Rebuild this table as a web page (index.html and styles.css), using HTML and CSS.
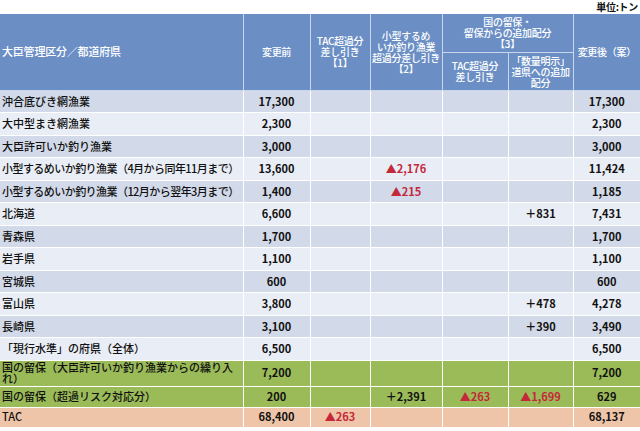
FILE: index.html
```html
<!DOCTYPE html>
<html lang="ja">
<head>
<meta charset="utf-8">
<link rel="stylesheet" href="styles.css">
</head>
<body>
<div class="unit">単位:トン</div>
<table class="tac">
  <colgroup>
    <col class="c-label"><col class="c-before"><col class="c-tac"><col class="c-small"><col class="c-res1"><col class="c-res2"><col class="c-after">
  </colgroup>
  <thead>
    <tr class="h1">
      <th rowspan="2" class="lh">大臣管理区分／都道府県</th>
      <th rowspan="2">変更前</th>
      <th rowspan="2">TAC超過分<br>差し引き<br>【1】</th>
      <th rowspan="2">小型するめ<br>いか釣り漁業<br>超過分差し引き<br>【2】</th>
      <th colspan="2">国の留保・<br>留保からの追加配分<br>【3】</th>
      <th rowspan="2">変更後（案）</th>
    </tr>
    <tr class="h2">
      <th>TAC超過分<br>差し引き</th>
      <th>「数量明示」<br>道県への追加<br>配分</th>
    </tr>
  </thead>
  <tbody>
    <tr class="d"><td class="lb">沖合底びき網漁業</td><td>17,300</td><td></td><td></td><td></td><td></td><td>17,300</td></tr>
    <tr class="l"><td class="lb">大中型まき網漁業</td><td>2,300</td><td></td><td></td><td></td><td></td><td>2,300</td></tr>
    <tr class="d"><td class="lb">大臣許可いか釣り漁業</td><td>3,000</td><td></td><td></td><td></td><td></td><td>3,000</td></tr>
    <tr class="l"><td class="lb tight">小型するめいか釣り漁業（4月から同年11月まで）</td><td>13,600</td><td></td><td class="neg">▲2,176</td><td></td><td></td><td>11,424</td></tr>
    <tr class="d"><td class="lb tight">小型するめいか釣り漁業（12月から翌年3月まで）</td><td>1,400</td><td></td><td class="neg">▲215</td><td></td><td></td><td>1,185</td></tr>
    <tr class="l"><td class="lb">北海道</td><td>6,600</td><td></td><td></td><td></td><td>＋831</td><td>7,431</td></tr>
    <tr class="d"><td class="lb">青森県</td><td>1,700</td><td></td><td></td><td></td><td></td><td>1,700</td></tr>
    <tr class="l"><td class="lb">岩手県</td><td>1,100</td><td></td><td></td><td></td><td></td><td>1,100</td></tr>
    <tr class="d"><td class="lb">宮城県</td><td>600</td><td></td><td></td><td></td><td></td><td>600</td></tr>
    <tr class="l"><td class="lb">富山県</td><td>3,800</td><td></td><td></td><td></td><td>＋478</td><td>4,278</td></tr>
    <tr class="d"><td class="lb">長崎県</td><td>3,100</td><td></td><td></td><td></td><td>＋390</td><td>3,490</td></tr>
    <tr class="l"><td class="lb">「現行水準」の府県（全体）</td><td>6,500</td><td></td><td></td><td></td><td></td><td>6,500</td></tr>
    <tr class="g tall"><td class="lb">国の留保（大臣許可いか釣り漁業からの繰り入れ）</td><td>7,200</td><td></td><td></td><td></td><td></td><td>7,200</td></tr>
    <tr class="g g2"><td class="lb">国の留保（超過リスク対応分）</td><td>200</td><td></td><td>＋2,391</td><td class="neg">▲263</td><td class="neg">▲1,699</td><td>629</td></tr>
    <tr class="p"><td class="lb">TAC</td><td>68,400</td><td class="neg">▲263</td><td></td><td></td><td></td><td>68,137</td></tr>
  </tbody>
</table>
</body>
</html>
```

FILE: styles.css
```css
html, body {
  margin: 0;
  padding: 0;
  background: #fff;
}
body {
  width: 640px;
  height: 431px;
  overflow: hidden;
  font-family: "Noto Sans CJK JP", "Liberation Sans", sans-serif;
  color: #111;
}
.unit {
  height: 14px;
  font-size: 10px;
  line-height: 14px;
  font-weight: 700;
  text-align: right;
  padding-right: 2px;
  letter-spacing: -0.3px;
}
.tac {
  width: 640px;
  border-collapse: collapse;
  table-layout: fixed;
  font-size: 11px;
}
.c-label { width: 243px; }
.c-before { width: 67px; }
.c-tac { width: 60px; }
.c-small { width: 72px; }
.c-res1 { width: 66px; }
.c-res2 { width: 65px; }
.c-after { width: 67px; }

.tac th {
  background: #6b8fc5;
  color: #fff;
  font-weight: 500;
  font-size: 10px;
  line-height: 11px;
  padding: 0;
  border: 1px solid #c9d6ec;
  text-align: center;
  vertical-align: middle;
  letter-spacing: -0.3px;
  white-space: nowrap;
  overflow: hidden;
}
.tac thead tr:first-child th { border-top: none; }
.tac th:first-child { border-left: none; }
.tac th:last-child { border-right: none; }
.h1 { height: 38px; }
.h2 { height: 38px; }
.tac th.lh {
  text-align: left;
  padding-left: 2px;
  font-size: 11px;
  letter-spacing: -0.2px;
}
.tac td {
  border: 1px solid #fff;
  padding: 0;
  text-align: center;
  vertical-align: middle;
  font-weight: 700;
  line-height: 11.5px;
  white-space: nowrap;
}
.tac td:first-child { border-left: none; }
.tac td:last-child { border-right: none; }
.tac td.lb {
  text-align: left;
  padding-left: 2px;
  font-weight: 500;
  white-space: normal;
}
.tac td.tight {
  white-space: nowrap;
  letter-spacing: -0.55px;
}
.tac tbody tr { height: 22.5px; }
.d td { background: #d2d9e8; }
.l td { background: #e9edf5; }
.g td { background: #9bbb59; }
.tac tbody tr.tall { height: 26px; }
.tac tbody tr.g2 { height: 21px; }
.tac tbody tr.p { height: 20px; }
.p td { background: #eec5a8; }
.tac td.neg { color: #c4283a; }
```
